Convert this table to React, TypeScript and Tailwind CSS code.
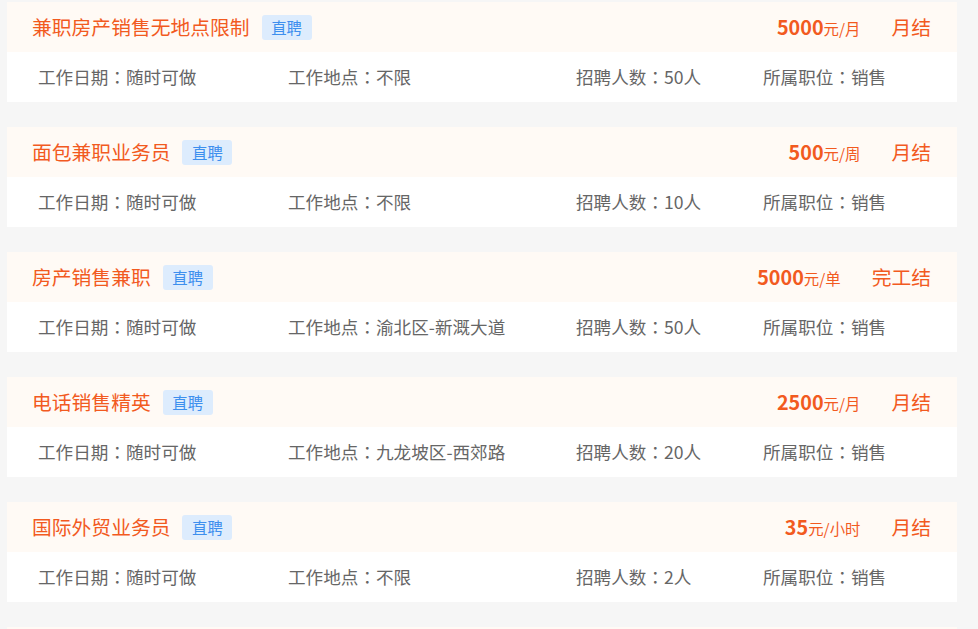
import React from 'react';

type Job = {
  title: string;
  salary: string;
  unit: string;
  settle: string;
  place: string;
  count: string;
};

const jobs: Job[] = [
  { title: '兼职房产销售无地点限制', salary: '5000', unit: '元/月', settle: '月结', place: '不限', count: '50人' },
  { title: '面包兼职业务员', salary: '500', unit: '元/周', settle: '月结', place: '不限', count: '10人' },
  { title: '房产销售兼职', salary: '5000', unit: '元/单', settle: '完工结', place: '渝北区-新溉大道', count: '50人' },
  { title: '电话销售精英', salary: '2500', unit: '元/月', settle: '月结', place: '九龙坡区-西郊路', count: '20人' },
  { title: '国际外贸业务员', salary: '35', unit: '元/小时', settle: '月结', place: '不限', count: '2人' },
];

// centred full-width colon, the way the reference font draws it
const Colon = () => <span style={{ fontFamily: '"Noto Sans CJK TC", sans-serif' }}>：</span>;

function JobCard({ job }: { job: Job }) {
  return (
    <div className="w-[950px] bg-white">
      <div className="flex h-[50px] items-center bg-[#fffaf5] pl-[25px] pr-[26px]">
        <span className="text-[19.8px] leading-none text-[#f25a1f]">{job.title}</span>
        <span className="ml-[12px] flex h-[25px] w-[50px] items-center justify-center rounded-[3px] bg-[#ddecfd] pt-[2px] text-[15.4px] text-[#3d8fee]">
          直聘
        </span>
        <div className="ml-auto flex items-baseline">
          <span className="text-[19.8px] font-bold text-[#f25a1f]">{job.salary}</span>
          <span className="text-[15.4px] text-[#f25a1f]">{job.unit}</span>
          <span className="ml-[31px] text-[19.8px] text-[#f25a1f]">{job.settle}</span>
        </div>
      </div>
      <div className="flex h-[50px] items-center pl-[31px] text-[17.6px] text-[#666666]">
        <span className="w-[250px]">工作日期<Colon />随时可做</span>
        <span className="w-[288px]">工作地点<Colon />{job.place}</span>
        <span className="w-[187px]">招聘人数<Colon />{job.count}</span>
        <span>所属职位<Colon />销售</span>
      </div>
    </div>
  );
}

export default function App() {
  return (
    <div
      className="h-[629px] w-[978px] overflow-hidden bg-[#f6f6f6] pl-[7px] pt-[2px]"
      style={{ fontFamily: '"Noto Sans CJK SC", "Noto Sans", sans-serif' }}
    >
      <div className="flex flex-col gap-[25px]">
        {jobs.map((job, i) => (
          <JobCard key={i} job={job} />
        ))}
        <div className="h-[50px] w-[950px] bg-[#fffaf5]" />
      </div>
    </div>
  );
}
